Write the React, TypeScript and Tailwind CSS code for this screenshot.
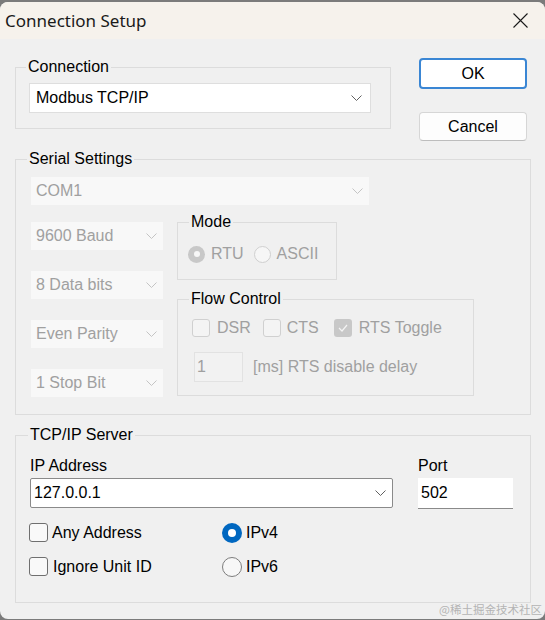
import React from 'react';

const Chevron = ({ disabled }: { disabled?: boolean }) => (
  <svg width="11" height="6" viewBox="0 0 11 6" fill="none">
    <path d="M0.5 0.5 L5.5 5.5 L10.5 0.5" stroke={disabled ? '#c4c4c4' : '#606060'} strokeWidth="1" />
  </svg>
);

const GroupBox = ({
  label,
  className,
  labelClass,
  children,
}: {
  label: string;
  className: string;
  labelClass: string;
  children: React.ReactNode;
}) => (
  <div className={`border border-[#dcdcdc] ${className}`}>
    <div className={`-mt-[10px] w-fit bg-[#f0f0f0] px-[2px] leading-[18px] text-black ${labelClass}`}>{label}</div>
    {children}
  </div>
);

const DisabledCombo = ({ value, className }: { value: string; className: string }) => (
  <div className={`flex items-center justify-between bg-[#f8f8f8] pl-[5px] pr-[6px] text-[#a0a0a0] ${className}`}>
    <span>{value}</span>
    <Chevron disabled />
  </div>
);

const Check = ({ checked, disabled }: { checked?: boolean; disabled?: boolean }) => {
  if (disabled && checked) {
    return (
      <div className="flex h-[18px] w-[18px] items-center justify-center rounded-[3px] bg-[#c8c8c8]">
        <svg width="10" height="8" viewBox="0 0 10 8" fill="none">
          <path d="M1 4 L4 7 L9 1" stroke="#f4f4f4" strokeWidth="1.2" />
        </svg>
      </div>
    );
  }
  return (
    <div
      className={
        disabled
          ? 'h-[18px] w-[18px] rounded-[3px] border border-[#d0d0d0] bg-[#f4f4f4]'
          : 'h-[19px] w-[19px] rounded-[3px] border border-[#6f6f6f] bg-[#f9f9f9]'
      }
    />
  );
};

const SmallRadio = ({ checked }: { checked?: boolean }) =>
  checked ? (
    <div className="flex h-[17px] w-[17px] items-center justify-center rounded-full bg-[#c8c8c8]">
      <div className="h-[6px] w-[6px] rounded-full bg-[#f7f7f7]" />
    </div>
  ) : (
    <div className="h-[17px] w-[17px] rounded-full border border-[#cfcfcf] bg-[#f6f6f6]" />
  );

const Radio = ({ checked }: { checked?: boolean }) =>
  checked ? (
    <div className="flex h-[20px] w-[20px] items-center justify-center rounded-full bg-[#0067c0]">
      <div className="h-[8px] w-[8px] rounded-full bg-white" />
    </div>
  ) : (
    <div className="h-[20px] w-[20px] rounded-full border border-[#7d7d7d] bg-[#f7f7f7]" />
  );

export default function App() {
  return (
    <div className="h-[620px] w-[545px] overflow-hidden bg-[#7b7b7b] pt-[2px] font-['Liberation_Sans',Arial,sans-serif] text-[16px] leading-[18px] text-black">
      <div className="relative h-[617px] w-[545px] overflow-hidden rounded-[8px] bg-[#f0f0f0]">
        {/* title bar */}
        <div className="flex h-[37px] items-start justify-between bg-[#f6f2ec] pl-[5px] pr-[17px] pt-[7px]">
          <span className="font-['Noto_Sans',sans-serif] text-[17px] leading-[23px] text-[#1a1a1a]">Connection Setup</span>
          <svg className="mt-[4px]" width="15" height="15" viewBox="0 0 15 15" fill="none">
            <path d="M0.5 0.5 L14.5 14.5 M14.5 0.5 L0.5 14.5" stroke="#1a1a1a" strokeWidth="1.1" />
          </svg>
        </div>

        <div className="pl-[15px] pt-[19px]">
          <div className="flex items-start">
            <GroupBox label="Connection" className="mt-[9px] w-[376px] pb-[15px]" labelClass="ml-[10px]">
              <div className="ml-[13px] mt-[7px] flex h-[30px] w-[342px] items-center justify-between border border-[#dedede] bg-white pl-[6px] pr-[8px]">
                <span>Modbus TCP/IP</span>
                <Chevron />
              </div>
            </GroupBox>
            <div className="ml-[28px] flex flex-col">
              <button className="flex h-[31px] w-[108px] items-center justify-center rounded-[4px] border-2 border-[#3a86d4] bg-white">
                OK
              </button>
              <button className="mt-[23px] flex h-[29px] w-[108px] items-center justify-center rounded-[4px] border border-[#d6d6d6] border-b-[#bdbdbd] bg-[#fdfdfd]">
                Cancel
              </button>
            </div>
          </div>

          <GroupBox label="Serial Settings" className="mt-[18px] w-[516px] pb-[17px]" labelClass="ml-[11px]">
            <DisabledCombo value="COM1" className="ml-[15px] mt-[9px] h-[28px] w-[338px]" />
            <div className="ml-[15px] mt-[17px] flex items-start">
              <div className="flex w-[132px] flex-col gap-[21px]">
                <DisabledCombo value="9600 Baud" className="h-[28px] w-[132px]" />
                <DisabledCombo value="8 Data bits" className="h-[28px] w-[132px]" />
                <DisabledCombo value="Even Parity" className="h-[28px] w-[132px]" />
                <DisabledCombo value="1 Stop Bit" className="h-[28px] w-[132px]" />
              </div>
              <div className="ml-[14px] flex flex-col">
                <GroupBox label="Mode" className="w-[160px] pb-[16px]" labelClass="ml-[11px]">
                  <div className="ml-[10px] mt-[14px] flex h-[18px] items-center text-[#a0a0a0]">
                    <SmallRadio checked />
                    <span className="ml-[6px]">RTU</span>
                    <div className="ml-[10px]">
                      <SmallRadio />
                    </div>
                    <span className="ml-[6px]">ASCII</span>
                  </div>
                </GroupBox>
                <GroupBox label="Flow Control" className="mt-[19px] w-[297px] pb-[13px]" labelClass="ml-[11px]">
                  <div className="ml-[14px] mt-[10px] flex h-[19px] items-center text-[#a0a0a0]">
                    <Check disabled />
                    <span className="ml-[7px]">DSR</span>
                    <div className="ml-[12px]">
                      <Check disabled />
                    </div>
                    <span className="ml-[6px]">CTS</span>
                    <div className="ml-[15px]">
                      <Check disabled checked />
                    </div>
                    <span className="ml-[7px]">RTS Toggle</span>
                  </div>
                  <div className="ml-[16px] mt-[15px] flex items-center text-[#a0a0a0]">
                    <div className="flex h-[30px] w-[49px] items-center border border-[#e2e2e2] bg-[#f2f2f2] pl-[2px]">1</div>
                    <span className="ml-[10px]">[ms] RTS disable delay</span>
                  </div>
                </GroupBox>
              </div>
            </div>
          </GroupBox>

          <GroupBox label="TCP/IP Server" className="mt-[20px] w-[516px] pb-[26px]" labelClass="ml-[12px]">
            <div className="ml-[14px] mt-[13px] flex items-start">
              <div className="flex w-[363px] flex-col">
                <span className="h-[18px]">IP Address</span>
                <div className="mt-[3px] flex h-[30px] items-center justify-between rounded-[2px] border border-[#8a8a8a] bg-white pl-[3px] pr-[6px]">
                  <span>127.0.0.1</span>
                  <Chevron />
                </div>
              </div>
              <div className="ml-[25px] flex w-[95px] flex-col">
                <span className="h-[18px]">Port</span>
                <div className="mt-[3px] flex h-[31px] items-center border-b border-[#8a8a8a] bg-white pl-[3px]">502</div>
              </div>
            </div>
            <div className="ml-[13px] mt-[14px] grid grid-cols-[193px_1fr] gap-y-[15px]">
              <div className="flex h-[19px] items-center">
                <Check />
                <span className="ml-[4px]">Any Address</span>
              </div>
              <div className="flex h-[19px] items-center">
                <Radio checked />
                <span className="ml-[4px]">IPv4</span>
              </div>
              <div className="flex h-[19px] items-center">
                <Check />
                <span className="ml-[5px]">Ignore Unit ID</span>
              </div>
              <div className="flex h-[19px] items-center">
                <Radio />
                <span className="ml-[4px]">IPv6</span>
              </div>
            </div>
          </GroupBox>
        </div>

        <span className="absolute bottom-[3px] right-[3px] font-['Noto_Sans_CJK_SC',sans-serif] text-[11.5px] leading-[14px] text-[#b4b4b4]">
          @稀土掘金技术社区
        </span>
      </div>
    </div>
  );
}
